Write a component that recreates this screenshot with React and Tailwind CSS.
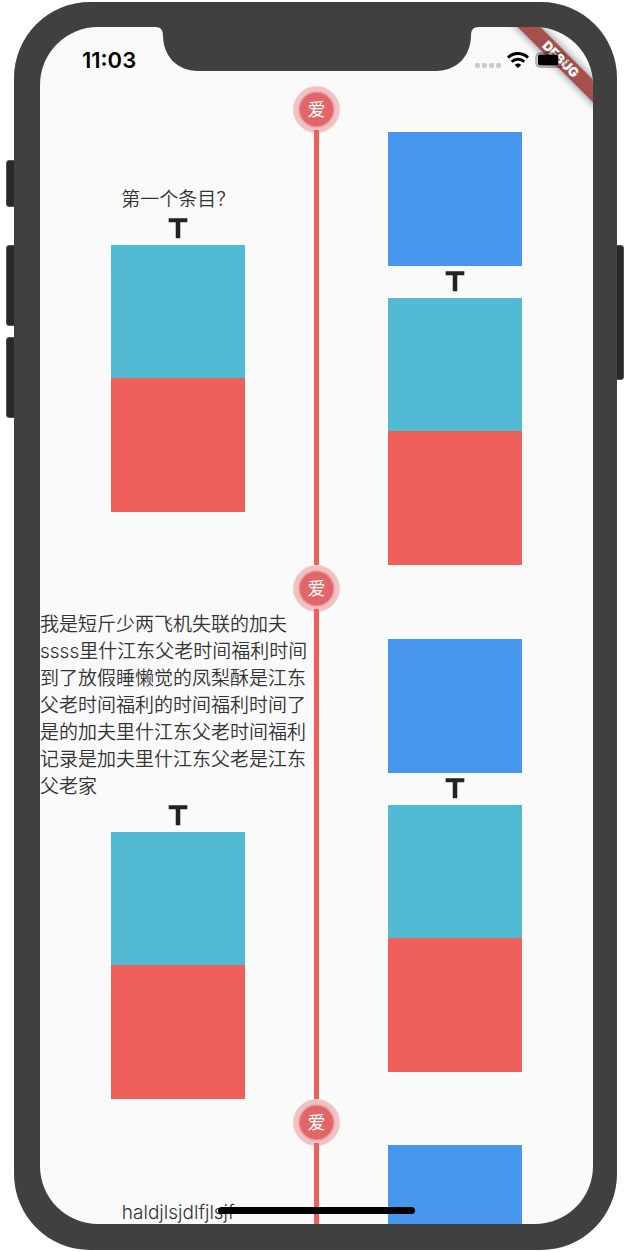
import React from 'react';

const ENTRIES = [
  { id: 1, text: '第一个条目？' },
  {
    id: 2,
    text: '我是短斤少两飞机失联的加夫ssss里什江东父老时间福利时间到了放假睡懒觉的凤梨酥是江东父老时间福利的时间福利时间了是的加夫里什江东父老时间福利记录是加夫里什江东父老是江东父老家',
  },
  { id: 3, text: 'haldjlsjdlfjlsjf' },
];

function TitleIcon() {
  return (
    <svg viewBox="0 0 24 24" className="size-8 shrink-0 fill-[#222222]" aria-hidden="true">
      <path d="M5 4v3h5.300v12h3.400V7H19V4z" />
    </svg>
  );
}

function Blocks() {
  return (
    <>
      <TitleIcon />
      <div className="h-[133px] w-[134px] bg-[#52bad2]" />
      <div className="h-[134px] w-[134px] bg-[#ee6059]" />
    </>
  );
}

function Badge() {
  return (
    <div className="relative flex h-[46px] justify-center">
      <span className="flex size-[47px] shrink-0 items-center justify-center rounded-full border border-[#f3cdb8] bg-[#f0c2c6]">
        <span className="flex size-[33px] items-center justify-center rounded-full bg-[#e26568] text-lg leading-none text-white shadow-[0_0_2px_1px_#e2767a]">
          爱
        </span>
      </span>
    </div>
  );
}

function Entry({ text }) {
  return (
    <li>
      <Badge />
      <div className="relative grid grid-cols-2 items-center">
        <div className="flex flex-col items-center">
          <p className="text-[19px] leading-[27px] font-[350] text-[#333333]">{text}</p>
          <Blocks />
        </div>
        <div className="flex flex-col items-center">
          <div className="h-[134px] w-[134px] bg-[#4596ec]" />
          <Blocks />
        </div>
        <div className="absolute inset-x-0 -top-0.5 bottom-0 flex justify-center">
          <div className="w-[5px] bg-[#ee6059]" />
        </div>
      </div>
    </li>
  );
}

function Notch() {
  return (
    <svg viewBox="0 0 324 44" className="h-11 w-[324px] fill-[#404040]" aria-hidden="true">
      <path d="M0 0C6 0 8 3 8 9C8.500 30 23 44 43 44H281C301 44 315.500 30 316 9C316 3 318 0 324 0Z" />
    </svg>
  );
}

function WifiIcon() {
  return (
    <svg viewBox="0 0 22 16" className="h-4 w-[22px]" aria-hidden="true">
      <g fill="none" stroke="#000" strokeWidth="3">
        <path d="M1 5.600a14.200 14.200 0 0 1 20 0" />
        <path d="M4.700 9.700a9 9 0 0 1 12.600 0" />
      </g>
      <path d="M11 15.900l-3.200-3a4.600 4.600 0 0 1 6.400 0z" />
    </svg>
  );
}

function BatteryIcon() {
  return (
    <svg viewBox="0 0 34 16" className="h-4 w-[34px]" aria-hidden="true">
      <rect x="1" y="1" width="29" height="14" rx="4" fill="none" stroke="#000" strokeOpacity=".4" strokeWidth="1.300" />
      <rect x="2.800" y="2.500" width="20.500" height="11" rx="2" />
      <path d="M31.500 5.500c2 .6 2 4.400 0 5z" fillOpacity=".4" />
    </svg>
  );
}

function StatusBar() {
  return (
    <div className="absolute inset-x-0 top-0 flex h-[66px] items-center justify-between pr-6 pl-[42px]">
      <time className="text-[22px] leading-none font-semibold text-black">11:03</time>
      <div className="flex items-center gap-1.5">
        <div className="flex gap-0.5 pt-2.5">
          <i className="size-[5px] rounded-[2px] bg-[#c8c8c8]" />
          <i className="size-[5px] rounded-[2px] bg-[#c8c8c8]" />
          <i className="size-[5px] rounded-[2px] bg-[#c8c8c8]" />
          <i className="size-[5px] rounded-[2px] bg-[#c8c8c8]" />
        </div>
        <WifiIcon />
        <BatteryIcon />
      </div>
    </div>
  );
}

function SideButton({ className }) {
  return <div className={`w-4 rounded-[3px] border border-[#555555] bg-[#282828] ${className}`} />;
}

export default function App() {
  return (
    <div className="h-screen bg-white pt-0.5 pr-[15px] pb-0.5 pl-3.5 font-[Inter,'Noto_Sans_CJK_SC',sans-serif]">
      <div className="relative h-full">
        <div className="absolute top-[158px] -left-2">
          <SideButton className="h-[47px]" />
          <SideButton className="mt-[38px] h-[81px]" />
          <SideButton className="mt-[11px] h-[81px]" />
        </div>
        <div className="absolute top-[243px] -right-[7px]">
          <SideButton className="h-[135px]" />
        </div>
        <div className="relative h-full rounded-[76px] bg-[#404040] pt-[25px] pr-6 pb-[26px] pl-[26px]">
          <main className="relative h-full overflow-hidden rounded-[58px] bg-[#fafafa]">
            <ol className="h-full overflow-y-auto pt-[59px] [scrollbar-width:none]">
              {ENTRIES.map((entry) => (
                <Entry key={entry.id} text={entry.text} />
              ))}
            </ol>
            <div className="absolute top-6 -right-[38px] flex h-4 w-[140px] rotate-45 items-center justify-center bg-[#a5504c] text-[13px] leading-none font-black text-white shadow-[0_0_8px_rgba(0,0,0,0.5)]">
              DEBUG
            </div>
            <StatusBar />
            <div className="absolute inset-x-0 top-0 flex justify-center">
              <Notch />
            </div>
            <div className="absolute inset-x-0 bottom-2.5 flex justify-center">
              <div className="h-[7px] w-[197px] rounded-full bg-black" />
            </div>
          </main>
        </div>
      </div>
    </div>
  );
}
